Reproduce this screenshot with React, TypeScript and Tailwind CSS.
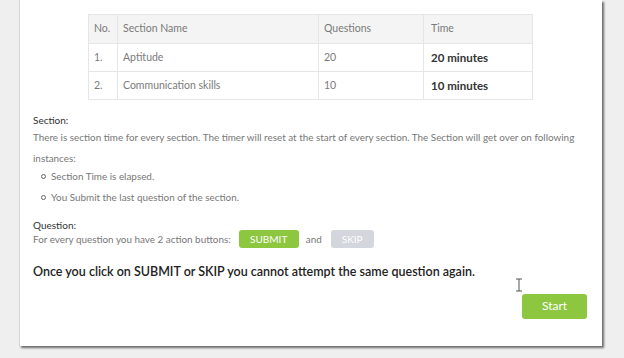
import React from "react";

const rows = [
  { no: "1.", name: "Aptitude", questions: "20", time: "20 minutes" },
  { no: "2.", name: "Communication skills", questions: "10", time: "10 minutes" },
];

export default function App() {
  return (
    <div className="relative h-[358px] w-[624px] overflow-hidden bg-[#efefef] font-['Lato',sans-serif]">
      {/* Card */}
      <div className="ml-[19px] h-[346px] w-[583px] border-l border-[#d6d6d6] bg-white shadow-[2px_2px_2px_rgba(0,0,0,0.55)]">
        <div className="pt-[14px] pl-[68px]">
          <table className="w-[445px] border-collapse text-[10.5px] text-[#7a7a7a]">
            <thead>
              <tr className="h-[29px] bg-[#f4f4f4]">
                <th className="w-[29px] border border-[#e6e6e6] pl-[5px] text-left font-normal">No.</th>
                <th className="w-[201px] border border-[#e6e6e6] pl-[5px] text-left font-normal">Section Name</th>
                <th className="w-[105px] border border-[#e6e6e6] pl-[5px] text-left font-normal">Questions</th>
                <th className="border border-[#e6e6e6] pl-[7px] text-left font-normal">Time</th>
              </tr>
            </thead>
            <tbody>
              {rows.map((r) => (
                <tr key={r.no} className="h-[28px]">
                  <td className="border border-[#e6e6e6] pl-[5px]">{r.no}</td>
                  <td className="border border-[#e6e6e6] pl-[5px]">{r.name}</td>
                  <td className="border border-[#e6e6e6] pl-[5px]">{r.questions}</td>
                  <td className="border border-[#e6e6e6] pl-[7px] text-[11.5px] font-bold text-[#333]">{r.time}</td>
                </tr>
              ))}
            </tbody>
          </table>
        </div>

        <div className="pl-[13px] pr-[15px] text-[9.9px] text-[#777]">
          {/* Section rules */}
          <div className="mt-[13px] text-[10px] text-[#333]">Section:</div>
          <p className="mt-[-1px] leading-[21px]">
            There is section time for every section. The timer will reset at the start of every section. The Section will get over on following instances:
          </p>
          <ul className="mt-[-3px] pl-[8px] leading-[21px]">
            <li className="flex items-center gap-[5px]">
              <span className="h-[5px] w-[5px] rounded-full border border-[#666]" />
              Section Time is elapsed.
            </li>
            <li className="flex items-center gap-[5px]">
              <span className="h-[5px] w-[5px] rounded-full border border-[#666]" />
              You Submit the last question of the section.
            </li>
          </ul>

          {/* Question rules */}
          <div className="mt-[10px] text-[10px] text-[#333]">Question:</div>
          <div className="mt-[-3px] flex items-center">
            <span>For every question you have 2 action buttons:</span>
            <span className="ml-[8px] flex h-[18px] w-[60px] items-center justify-center rounded-[3px] bg-[#8dc63f] text-[10px] text-white">SUBMIT</span>
            <span className="ml-[7px]">and</span>
            <span className="ml-[9px] flex h-[18px] w-[43px] items-center justify-center rounded-[3px] bg-[#d3d6dc] text-[10px] text-white">SKIP</span>
          </div>

          <p className="mt-[15px] text-[12.5px] font-semibold text-[#222]">
            Once you click on SUBMIT or SKIP you cannot attempt the same question again.
          </p>

          <div className="mt-[12px] flex justify-end">
            <button className="h-[25px] w-[65px] rounded-[3px] bg-[#8dc63f] text-[12px] text-white">Start</button>
          </div>
        </div>
      </div>

      {/* Mouse I-beam cursor */}
      <svg className="absolute left-[515px] top-[278px]" width="8" height="14" viewBox="0 0 8 14">
        <path d="M1 1h6M4 1v12M1 13h6" stroke="#555" strokeWidth="1" fill="none" />
      </svg>
    </div>
  );
}
